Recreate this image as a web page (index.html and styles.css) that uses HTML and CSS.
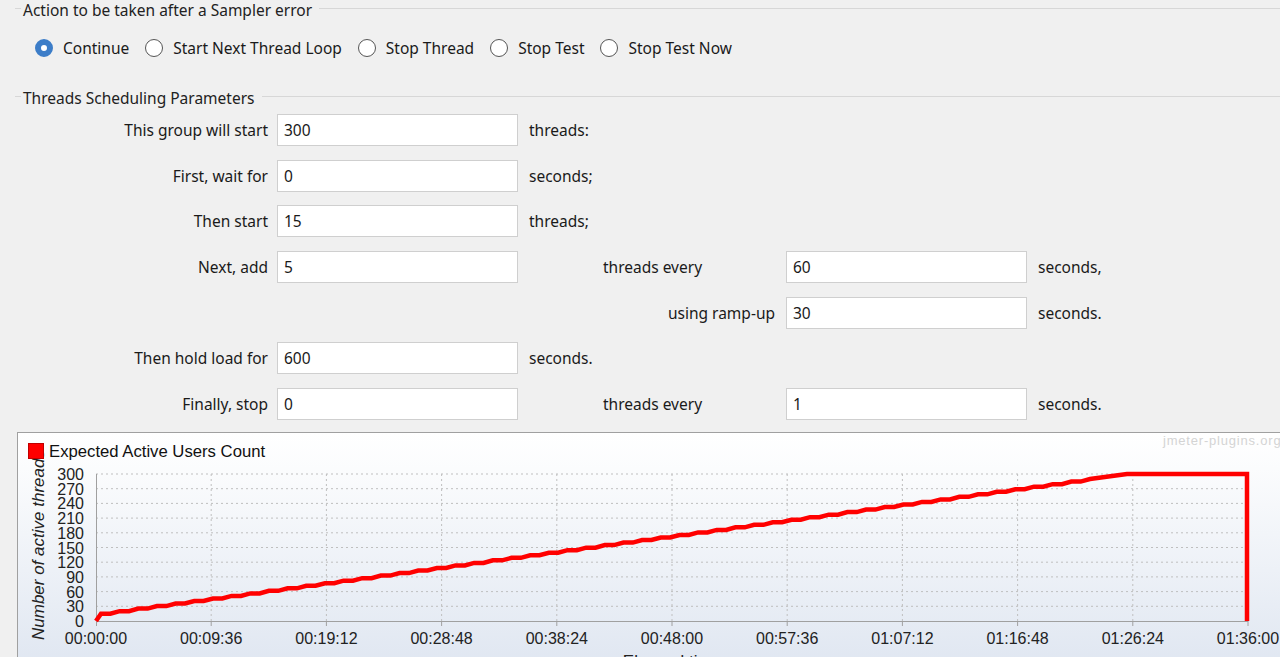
FILE: index.html
```html
<!DOCTYPE html>
<html>
<head>
<meta charset="utf-8">
<title>Thread Group</title>
<link rel="stylesheet" href="styles.css">
</head>
<body>
<div class="page">
  <section class="group">
    <div class="group-title"><span>Action to be taken after a Sampler error</span></div>
    <div class="radios">
      <label class="radio"><span class="dot checked"></span>Continue</label>
      <label class="radio"><span class="dot"></span>Start Next Thread Loop</label>
      <label class="radio"><span class="dot"></span>Stop Thread</label>
      <label class="radio"><span class="dot"></span>Stop Test</label>
      <label class="radio"><span class="dot"></span>Stop Test Now</label>
    </div>
  </section>

  <section class="group sched">
    <div class="group-title"><span>Threads Scheduling Parameters</span></div>
    <div class="params">
      <span class="lbl c1">This group will start</span>
      <div class="field c2">300</div>
      <span class="sfx c3">threads:</span>

      <span class="lbl c1">First, wait for</span>
      <div class="field c2">0</div>
      <span class="sfx c3">seconds;</span>

      <span class="lbl c1">Then start</span>
      <div class="field c2">15</div>
      <span class="sfx c3">threads;</span>

      <span class="lbl c1">Next, add</span>
      <div class="field c2">5</div>
      <span class="mid c4">threads every</span>
      <div class="field c5">60</div>
      <span class="sfx c6">seconds,</span>

      <span class="mid right c4">using ramp-up</span>
      <div class="field c5">30</div>
      <span class="sfx c6">seconds.</span>

      <span class="lbl c1">Then hold load for</span>
      <div class="field c2">600</div>
      <span class="sfx c3">seconds.</span>

      <span class="lbl c1">Finally, stop</span>
      <div class="field c2">0</div>
      <span class="mid c4">threads every</span>
      <div class="field c5">1</div>
      <span class="sfx c6">seconds.</span>
    </div>
  </section>

  <div class="chart">
    <svg class="chart-svg" width="1262" height="238" viewBox="18 433 1262 238" xmlns="http://www.w3.org/2000/svg">
      <text class="watermark" x="1163" y="445">jmeter-plugins.org</text>

      <g class="grid">
        <line x1="96" y1="606.3" x2="1248" y2="606.3"/>
        <line x1="96" y1="591.6" x2="1248" y2="591.6"/>
        <line x1="96" y1="576.9" x2="1248" y2="576.9"/>
        <line x1="96" y1="562.2" x2="1248" y2="562.2"/>
        <line x1="96" y1="547.5" x2="1248" y2="547.5"/>
        <line x1="96" y1="532.8" x2="1248" y2="532.8"/>
        <line x1="96" y1="518.1" x2="1248" y2="518.1"/>
        <line x1="96" y1="503.4" x2="1248" y2="503.4"/>
        <line x1="96" y1="488.7" x2="1248" y2="488.7"/>
        <line x1="96" y1="474" x2="1248" y2="474"/>
        <line x1="211.2" y1="474" x2="211.2" y2="621"/>
        <line x1="326.4" y1="474" x2="326.4" y2="621"/>
        <line x1="441.6" y1="474" x2="441.6" y2="621"/>
        <line x1="556.8" y1="474" x2="556.8" y2="621"/>
        <line x1="672" y1="474" x2="672" y2="621"/>
        <line x1="787.2" y1="474" x2="787.2" y2="621"/>
        <line x1="902.4" y1="474" x2="902.4" y2="621"/>
        <line x1="1017.6" y1="474" x2="1017.6" y2="621"/>
        <line x1="1132.8" y1="474" x2="1132.8" y2="621"/>
      </g>

      <g class="axis">
        <line x1="96.5" y1="474" x2="96.5" y2="626"/>
        <line x1="96" y1="621.5" x2="1248" y2="621.5"/>
        <line x1="211.2" y1="621" x2="211.2" y2="626"/>
        <line x1="326.4" y1="621" x2="326.4" y2="626"/>
        <line x1="441.6" y1="621" x2="441.6" y2="626"/>
        <line x1="556.8" y1="621" x2="556.8" y2="626"/>
        <line x1="672" y1="621" x2="672" y2="626"/>
        <line x1="787.2" y1="621" x2="787.2" y2="626"/>
        <line x1="902.4" y1="621" x2="902.4" y2="626"/>
        <line x1="1017.6" y1="621" x2="1017.6" y2="626"/>
        <line x1="1132.8" y1="621" x2="1132.8" y2="626"/>
        <line x1="1248" y1="621" x2="1248" y2="626"/>
      </g>

      <g class="ylab">
        <text x="84" y="627">0</text>
        <text x="84" y="612.3">30</text>
        <text x="84" y="597.6">60</text>
        <text x="84" y="582.9">90</text>
        <text x="84" y="568.2">120</text>
        <text x="84" y="553.5">150</text>
        <text x="84" y="538.8">180</text>
        <text x="84" y="524.1">210</text>
        <text x="84" y="509.4">240</text>
        <text x="84" y="494.7">270</text>
        <text x="84" y="480">300</text>
      </g>

      <g class="xlab">
        <text x="96" y="644">00:00:00</text>
        <text x="211.2" y="644">00:09:36</text>
        <text x="326.4" y="644">00:19:12</text>
        <text x="441.6" y="644">00:28:48</text>
        <text x="556.8" y="644">00:38:24</text>
        <text x="672" y="644">00:48:00</text>
        <text x="787.2" y="644">00:57:36</text>
        <text x="902.4" y="644">01:07:12</text>
        <text x="1017.6" y="644">01:16:48</text>
        <text x="1132.8" y="644">01:26:24</text>
        <text x="1248" y="644">01:36:00</text>
      </g>
      <text class="xtitle" x="672" y="667">Elapsed time</text>
      <text class="ytitle" x="44" y="640" transform="rotate(-90 44 640)">Number of active threads</text>

      <path class="series" d="M96 621 L101 613.7 h9.33 l9.33 -2.54 h9.33 l9.33 -2.54 h9.33 l9.33 -2.54 h9.33 l9.33 -2.54 h9.33 l9.33 -2.54 h9.33 l9.33 -2.54 h9.33 l9.33 -2.54 h9.33 l9.33 -2.54 h9.33 l9.33 -2.54 h9.33 l9.33 -2.54 h9.33 l9.33 -2.54 h9.33 l9.33 -2.54 h9.33 l9.33 -2.54 h9.33 l9.33 -2.54 h9.33 l9.33 -2.54 h9.33 l9.33 -2.54 h9.33 l9.33 -2.54 h9.33 l9.33 -2.54 h9.33 l9.33 -2.54 h9.33 l9.33 -2.54 h9.33 l9.33 -2.54 h9.33 l9.33 -2.54 h9.33 l9.33 -2.54 h9.33 l9.33 -2.54 h9.33 l9.33 -2.54 h9.33 l9.33 -2.54 h9.33 l9.33 -2.54 h9.33 l9.33 -2.54 h9.33 l9.33 -2.54 h9.33 l9.33 -2.54 h9.33 l9.33 -2.54 h9.33 l9.33 -2.54 h9.33 l9.33 -2.54 h9.33 l9.33 -2.54 h9.33 l9.33 -2.54 h9.33 l9.33 -2.54 h9.33 l9.33 -2.54 h9.33 l9.33 -2.54 h9.33 l9.33 -2.54 h9.33 l9.33 -2.54 h9.33 l9.33 -2.54 h9.33 l9.33 -2.54 h9.33 l9.33 -2.54 h9.33 l9.33 -2.54 h9.33 l9.33 -2.54 h9.33 l9.33 -2.54 h9.33 l9.33 -2.54 h9.33 l9.33 -2.54 h9.33 l9.33 -2.54 h9.33 l9.33 -2.54 h9.33 l9.33 -2.54 h9.33 l9.33 -2.54 h9.33 l9.33 -2.54 L1127 474 H1247 V621"/>

      <rect class="legend-box" x="28.5" y="443.5" width="15" height="15"/>
      <text class="legend" x="49" y="457">Expected Active Users Count</text>
    </svg>
  </div>
</div>
</body>
</html>
```

FILE: styles.css
```css
html, body {
  margin: 0;
  padding: 0;
}
body {
  width: 1280px;
  height: 657px;
  overflow: hidden;
  background: #f0f0f0;
  font-family: "Noto Sans", "Open Sans", sans-serif;
  font-size: 15.5px;
  color: #1a1a1a;
}
.page {
  display: flex;
  flex-direction: column;
}

/* titled border */
.group-title {
  display: flex;
  align-items: center;
  height: 20px;
  padding-left: 15px;
  color: #222;
  white-space: nowrap;
}
.group-title::before {
  content: "";
  width: 6px;
  height: 1px;
  margin-right: 2px;
  margin-top: -3px;
  background: #d7d7d7;
}
.group-title::after {
  content: "";
  flex: 1;
  height: 1px;
  margin-left: 7px;
  margin-top: -3px;
  background: #d7d7d7;
}

/* radio row */
.radios {
  display: flex;
  align-items: center;
  gap: 16px;
  height: 20px;
  margin-top: 18px;
  padding-left: 35px;
}
.radio {
  display: flex;
  align-items: center;
  gap: 10px;
  white-space: nowrap;
}
.dot {
  box-sizing: border-box;
  width: 18px;
  height: 18px;
  border-radius: 50%;
  border: 1px solid #555;
  background: #fff;
}
.dot.checked {
  border: 6px solid #3c7dc8;
  background: #fff;
}

/* scheduling */
.sched {
  margin-top: 30px;
}
.params {
  display: grid;
  grid-template-columns: 277px 241px 85px 183px 241px 1fr;
  grid-auto-rows: 32px;
  row-gap: 13.67px;
  margin-top: 6px;
  align-items: center;
  white-space: nowrap;
}
.c1 { grid-column: 1; }
.c2 { grid-column: 2; }
.c3 { grid-column: 3; }
.c4 { grid-column: 4; }
.c5 { grid-column: 5; }
.c6 { grid-column: 6; }
.lbl {
  text-align: right;
  padding-right: 9px;
}
.sfx {
  padding-left: 11px;
}
.mid.right {
  text-align: right;
  padding-right: 11px;
}
.field {
  box-sizing: border-box;
  height: 32px;
  display: flex;
  align-items: center;
  padding-left: 6px;
  background: #fff;
  border: 1px solid #cfcfcf;
}

/* chart */
.chart {
  margin-top: 12px;
  margin-left: 17px;
  height: 238px;
  border: 1px solid #a0a0a0;
  border-right: none;
  background: linear-gradient(180deg, #ffffff 0%, #fbfcfd 15%, #dfe6f1 100%);
  overflow: hidden;
}
.chart-svg {
  display: block;
  font-family: "Liberation Sans", Arial, sans-serif;
}
.grid line {
  stroke: #bfbfbf;
  stroke-width: 1;
  stroke-dasharray: 2 3;
}
.axis line {
  stroke: #a0a0a0;
  stroke-width: 1;
}
.ylab text {
  font-size: 16px;
  fill: #222;
  text-anchor: end;
}
.xlab text {
  font-size: 16px;
  fill: #222;
  text-anchor: middle;
}
.xtitle {
  font-size: 17px;
  fill: #222;
  text-anchor: middle;
}
.ytitle {
  font-size: 17px;
  font-style: italic;
  fill: #222;
}
.series {
  fill: none;
  stroke: #ff0000;
  stroke-width: 4.5;
  stroke-linejoin: miter;
}
.legend-box {
  fill: #ff0000;
  stroke: #c00000;
  stroke-width: 1;
}
.legend {
  font-size: 16.7px;
  fill: #111;
}
.watermark {
  font-size: 13px;
  fill: #d4d4d4;
  letter-spacing: 0.8px;
}
```
